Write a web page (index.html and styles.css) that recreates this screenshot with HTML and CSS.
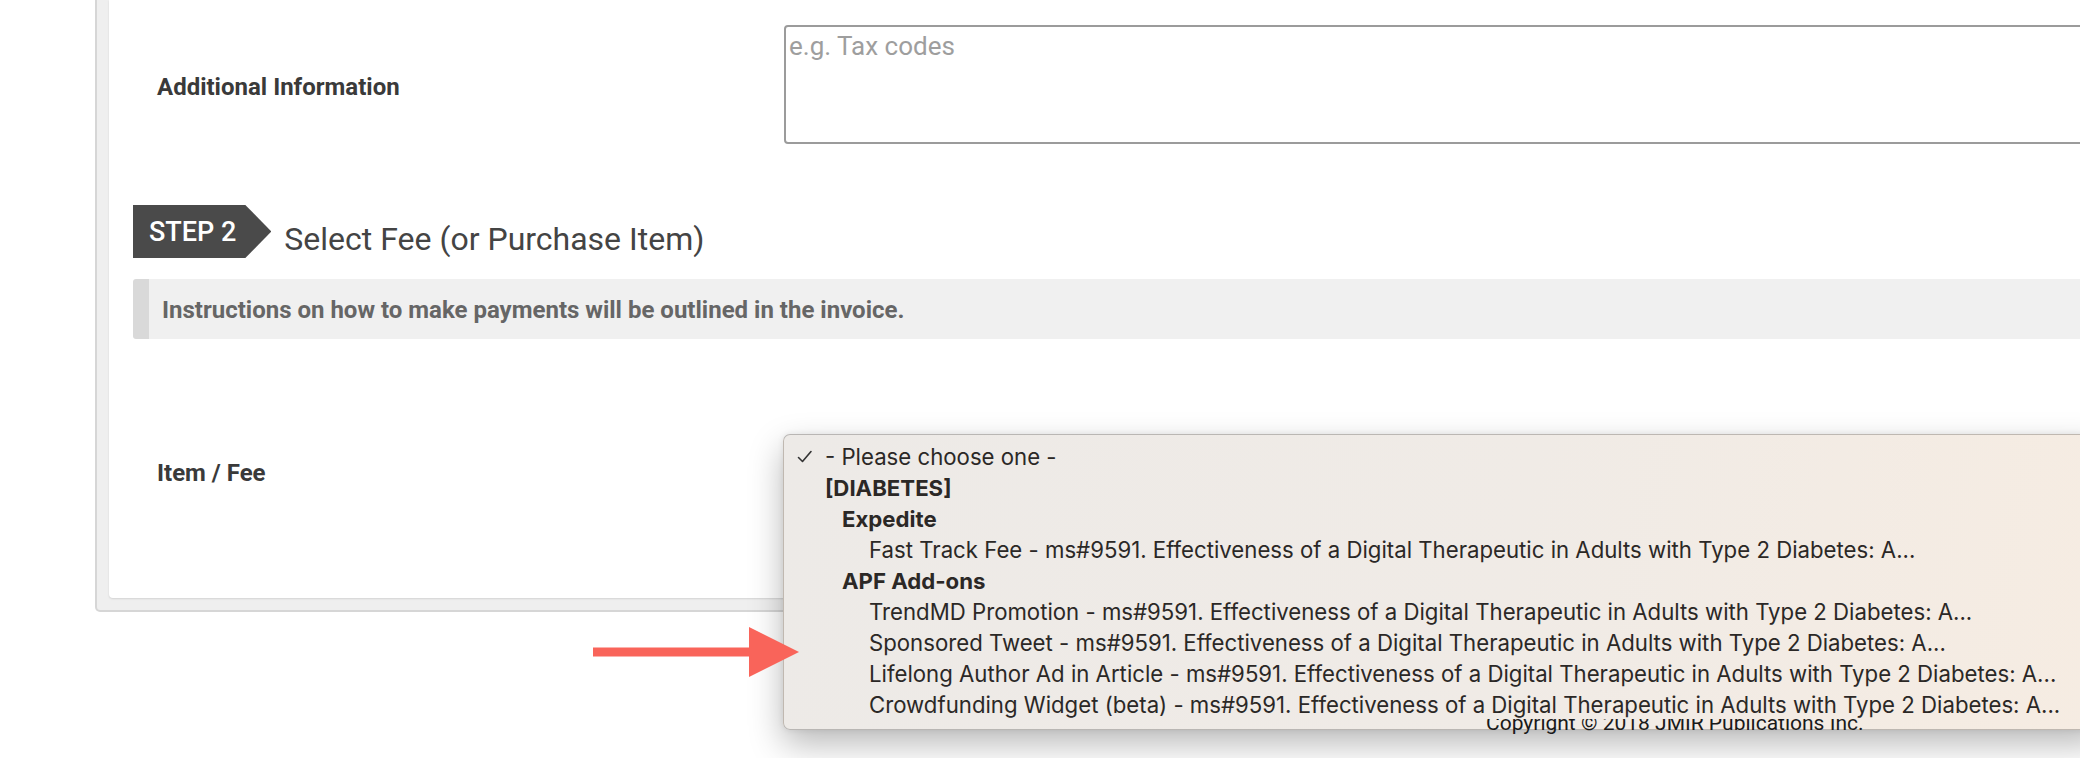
FILE: index.html
```html
<!DOCTYPE html>
<html lang="en">
<head>
<meta charset="utf-8">
<title>Select Fee</title>
<link rel="stylesheet" href="styles.css">
</head>
<body>
<div class="page">
  <div class="panel">
    <div class="inner">
      <div class="form-row row-info">
        <label class="label">Additional Information</label>
        <textarea class="textarea" placeholder="e.g. Tax codes"></textarea>
      </div>

      <div class="step">
        <div class="step-badge">STEP 2</div>
        <h2 class="step-title">Select Fee (or Purchase Item)</h2>
      </div>
      <div class="notice">Instructions on how to make payments will be outlined in the invoice.</div>

      <div class="form-row row-fee">
        <label class="label">Item / Fee</label>
        <div class="select-wrap">
          <div class="select"></div>
          <div class="menu">
            <div class="opt sel"><svg class="check" viewBox="0 0 18 18" width="18" height="18"><path d="M2.5 9.5 L6.5 13.5 L15 3.5" fill="none" stroke="#333" stroke-width="1.6" stroke-linecap="round" stroke-linejoin="round"/></svg>- Please choose one -</div>
            <div class="opt grp">[DIABETES]</div>
            <div class="opt grp sub">Expedite</div>
            <div class="opt item">Fast Track Fee - ms#9591. Effectiveness of a Digital Therapeutic in Adults with Type 2 Diabetes: A...</div>
            <div class="opt grp sub">APF Add-ons</div>
            <div class="opt item">TrendMD Promotion - ms#9591. Effectiveness of a Digital Therapeutic in Adults with Type 2 Diabetes: A...</div>
            <div class="opt item">Sponsored Tweet - ms#9591. Effectiveness of a Digital Therapeutic in Adults with Type 2 Diabetes: A...</div>
            <div class="opt item">Lifelong Author Ad in Article - ms#9591. Effectiveness of a Digital Therapeutic in Adults with Type 2 Diabetes: A...</div>
            <div class="opt item">Crowdfunding Widget (beta) - ms#9591. Effectiveness of a Digital Therapeutic in Adults with Type 2 Diabetes: A...</div>
          </div>
        </div>
      </div>
    </div>
  </div>
  <footer class="footer">Copyright © 2018 JMIR Publications Inc.</footer>
  <svg class="arrow" viewBox="0 0 206 50" width="206" height="50"><rect x="0" y="20.5" width="160" height="9" fill="#f9645a"/><polygon points="156,0 206,25 156,50" fill="#f9645a"/></svg>
</div>
</body>
</html>
```

FILE: styles.css
```css
html, body {
  margin: 0;
  padding: 0;
  background: #ffffff;
  overflow: hidden;
}

.page {
  position: relative;
  width: 2080px;
  height: 758px;
  overflow: hidden;
  font-family: Roboto, "Liberation Sans", sans-serif;
}

.panel {
  margin-left: 95px;
  width: 2200px;
  background: #efefef;
  border: 2px solid #d6d6d6;
  border-top: 0;
  border-radius: 0 0 5px 5px;
  padding: 0 12px 12px 12px;
}

.inner {
  background: #ffffff;
  border-radius: 0 0 4px 4px;
  box-shadow: 0 1px 2px rgba(0, 0, 0, 0.12);
  padding: 25px 0 100px 0;
}

.form-row {
  display: flex;
  align-items: center;
  padding-left: 48px;
}

.label {
  width: 627px;
  flex: none;
  font-size: 24px;
  font-weight: 700;
  color: #3a3a3a;
}

.row-info .label {
  position: relative;
  top: 2px;
}

.textarea {
  display: block;
  width: 1500px;
  height: 119px;
  box-sizing: border-box;
  margin: 0;
  border: 2px solid #9b9b9b;
  border-radius: 4px;
  padding: 4px 3px;
  font-family: Roboto, "Liberation Sans", sans-serif;
  font-size: 26px;
  line-height: 30px;
  resize: none;
  outline: none;
}

.textarea::placeholder {
  color: #9e9e9e;
}

.step {
  display: flex;
  align-items: center;
  margin: 61px 0 0 24px;
}

.step-badge {
  height: 53px;
  box-sizing: border-box;
  display: flex;
  align-items: center;
  padding: 0 35px 0 16px;
  background: #4a4a4a;
  color: #ffffff;
  font-size: 27px;
  font-weight: 500;
  clip-path: polygon(0 0, calc(100% - 26px) 0, 100% 50%, calc(100% - 26px) 100%, 0 100%);
}

.step-title {
  margin: 0 0 0 13px;
  font-size: 32px;
  font-weight: 400;
  color: #444444;
  position: relative;
  top: 7px;
}

.notice {
  margin: 21px 0 0 24px;
  height: 60px;
  box-sizing: border-box;
  display: flex;
  align-items: center;
  background: #f0f0f0;
  border-left: 16px solid #d9d9d9;
  border-radius: 3px;
  padding: 2px 0 0 13px;
  font-size: 24px;
  font-weight: 700;
  color: #666666;
}

.row-fee {
  margin-top: 109px;
}

.select-wrap {
  position: relative;
  width: 1500px;
}

.select {
  height: 50px;
  box-sizing: border-box;
  border: 2px solid #9b9b9b;
  border-radius: 4px;
}

.menu {
  position: absolute;
  left: -1px;
  top: -14px;
  width: 1320px;
  box-sizing: border-box;
  padding: 7px 0 8px 0;
  background: linear-gradient(100deg, #edeae7 0%, #f0ebe6 55%, #f6ece2 100%);
  border: 1px solid rgba(0, 0, 0, 0.22);
  border-radius: 7px;
  box-shadow: 0 14px 34px rgba(0, 0, 0, 0.28), 0 0 6px rgba(0, 0, 0, 0.08);
  font-family: Inter, "Noto Sans", sans-serif;
  font-size: 22.2px;
  color: #2b2826;
  z-index: 2;
}

.opt {
  position: relative;
  height: 31px;
  line-height: 30px;
  padding-left: 41px;
  white-space: nowrap;
}

.opt.grp {
  font-weight: 700;
}

.opt.sub {
  padding-left: 58px;
}

.opt.item {
  padding-left: 85px;
}

.check {
  position: absolute;
  left: 12px;
  top: 6px;
}

.footer {
  position: relative;
  z-index: 3;
  margin-top: 99px;
  padding-left: 1486px;
  font-size: 21px;
  color: #1a1a1a;
  white-space: nowrap;
  clip-path: inset(8px 0 0 0);
}

.arrow {
  position: absolute;
  left: 593px;
  top: 627px;
  z-index: 3;
}
```
